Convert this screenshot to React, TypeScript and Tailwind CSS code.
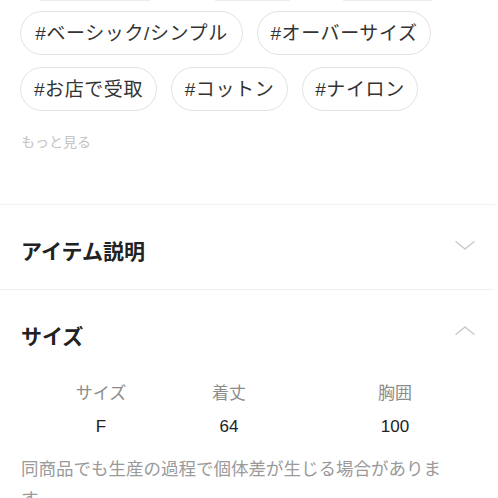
const font = { fontFamily: '"Liberation Sans", "Noto Sans CJK JP", sans-serif' };

const tags = [
  { label: "#ベーシック/シンプル", width: "w-[223px]" },
  { label: "#オーバーサイズ", width: "w-[174px]" },
  { label: "#お店で受取", width: "w-[137px]" },
  { label: "#コットン", width: "w-[117px]" },
  { label: "#ナイロン", width: "w-[116px]" },
];

const sizes = [
  { head: "サイズ", value: "F" },
  { head: "着丈", value: "64" },
  { head: "胸囲", value: "100" },
];

export default function App() {
  return (
    <div className="h-[498px] w-[498px] overflow-hidden bg-white" style={font}>
      {/* tail of the previous tag row */}
      <div className="relative h-[1px]">
        <div className="absolute left-[40px] top-0 h-[1px] w-[110px] bg-[#ececec]" />
        <div className="absolute left-[215px] top-0 h-[1px] w-[75px] bg-[#ececec]" />
        <div className="absolute left-[343px] top-0 h-[1px] w-[89px] bg-[#ececec]" />
      </div>

      <div className="flex flex-wrap gap-x-[14px] gap-y-[12px] px-[20px] pt-[10px]">
        {tags.map((tag) => (
          <span
            key={tag.label}
            className={`flex h-[44px] items-center justify-center rounded-full border border-[#e2e2e2] text-[19px] leading-none tracking-[0.6px] text-[#333] ${tag.width}`}
          >
            {tag.label}
          </span>
        ))}
      </div>

      <p className="ml-[21px] mt-[23px] text-[14px] leading-[16px] text-[#c4c4c4]">もっと見る</p>

      <div className="mt-[54px] mr-[3px] h-[1px] bg-[#f0f0f0]" />

      <Section title="アイテム説明" open={false} />

      <div className="mr-[5px] h-[1px] bg-[#f0f0f0]" />

      <Section title="サイズ" open />

      <div className="mt-[3px] grid grid-cols-[120px_136px_196px] pl-[41px] text-[17px]">
        {sizes.map((s) => (
          <div key={s.head} className="flex h-[33px] items-center justify-center text-[#8c8c8c]">
            {s.head}
          </div>
        ))}
        {sizes.map((s) => (
          <div key={s.value} className="flex h-[33px] items-center justify-center text-[#222]">
            {s.value}
          </div>
        ))}
      </div>

      <p className="ml-[21px] mt-[11px] w-[436px] text-[17.5px] leading-[30px] text-[#9a9a9a]">
        同商品でも生産の過程で個体差が生じる場合があります。
      </p>
    </div>
  );
}

function Chevron({ open }: { open: boolean }) {
  return (
    <svg width="20" height="9" viewBox="0 0 20 9" fill="none" className="mb-[4px]">
      <path
        d={open ? "M1 8.3 L10 1 L19 8.3" : "M1 0.7 L10 8 L19 0.7"}
        stroke="#c6c6c6"
        strokeWidth="1.3"
        strokeLinecap="round"
        strokeLinejoin="round"
      />
    </svg>
  );
}

function Section({ title, open }: { title: string; open: boolean }) {
  return (
    <div className="flex h-[84px] items-center justify-between pl-[21px] pr-[23px]">
      <h2 className="mt-[8px] text-[21px] font-bold leading-none text-[#222]">{title}</h2>
      <Chevron open={open} />
    </div>
  );
}
